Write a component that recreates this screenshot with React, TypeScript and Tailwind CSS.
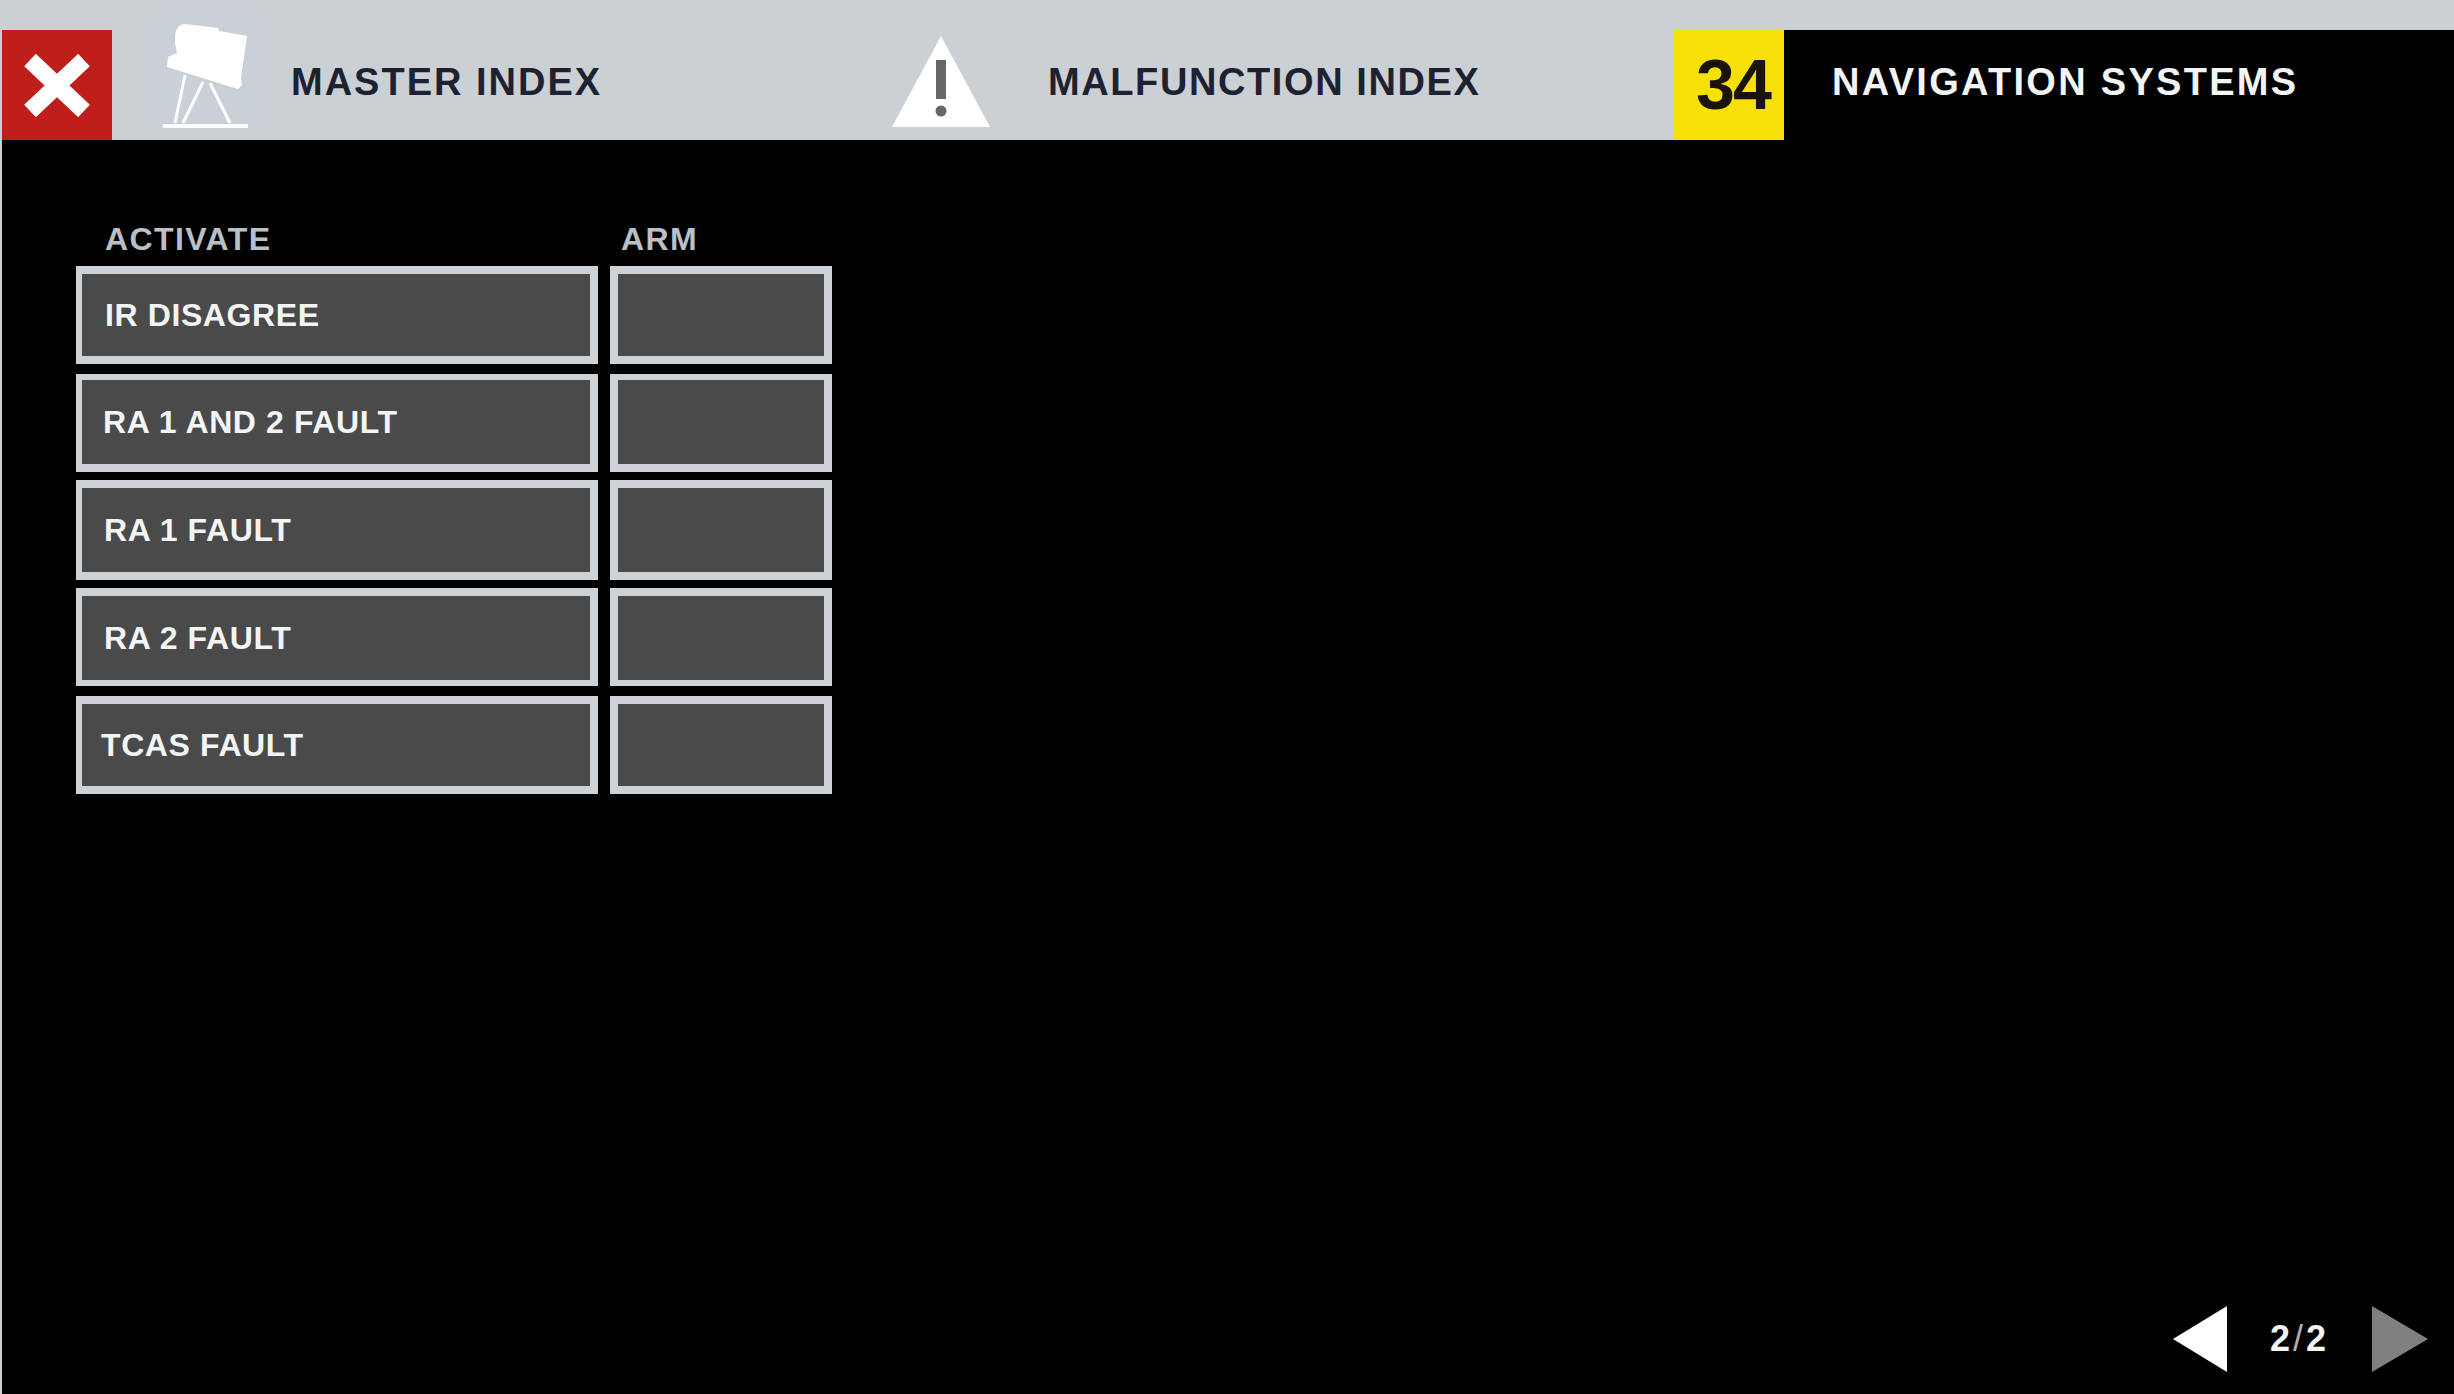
const rows = [
  { label: 'IR DISAGREE', gap: 'mt-0', box: 'h-[98px] border-t-8 border-b-8', text: 'pl-[23px]' },
  { label: 'RA 1 AND 2 FAULT', gap: 'mt-[10px]', box: 'h-[98px] border-t-[6px] border-b-8', text: 'pl-[21px]' },
  { label: 'RA 1 FAULT', gap: 'mt-2', box: 'h-[100px] border-t-8 border-b-8', text: 'pl-[22px]' },
  { label: 'RA 2 FAULT', gap: 'mt-2', box: 'h-[98px] border-t-8 border-b-[6px]', text: 'pl-[22px]' },
  { label: 'TCAS FAULT', gap: 'mt-[10px]', box: 'h-[98px] border-t-8 border-b-8', text: 'pl-[19px]' },
];

function MasterIcon() {
  return (
    <div className="mt-[15px] h-[113px] w-[108px] bg-[#c9d0d7]">
      <svg viewBox="0 0 108 113" className="h-full w-full">
        <path
          d="M26 20 Q28 9 36 9 L69 13 L70 16 L98 21 L92 63 L93 70 L89 74 L18 52 L19 42 L28 38 L26 28 Z"
          fill="#fff"
        />
        <path d="M36 60 L26 108 M54 67 L34 108 M61 68 L81 108" stroke="#fff" strokeWidth="3" fill="none" />
        <rect x="14" y="109" width="85" height="4" fill="#fff" />
      </svg>
    </div>
  );
}

function WarningIcon() {
  return (
    <svg viewBox="0 0 98 91" className="mt-9 h-[91px] w-[98px]">
      <path d="M49 0 L98 91 L0 91 Z" fill="#fff" />
      <rect x="44" y="24" width="10" height="39" fill="#666" />
      <circle cx="49" cy="75" r="5.5" fill="#666" />
    </svg>
  );
}

export default function App() {
  return (
    <div className="flex h-[1394px] flex-col bg-black font-['Liberation_Sans',Arial,sans-serif] font-bold">
      {/* header */}
      <div className="flex h-[140px] shrink-0 bg-[#cbd0d5]">
        <div className="ml-[2px] mt-[30px] flex h-[110px] w-[110px] shrink-0 items-center justify-center bg-[#bf1e1b]">
          <svg viewBox="0 0 66 63" className="h-[63px] w-[66px]">
            <path d="M6 6 L60 57 M60 6 L6 57" stroke="#fff" strokeWidth="17" fill="none" />
          </svg>
        </div>
        <div className="ml-[37px] flex w-[743px] shrink-0">
          <MasterIcon />
          <span className="ml-[34px] mt-[60px] text-[38px] leading-[44px] tracking-[2px] text-[#1e2230]">MASTER INDEX</span>
        </div>
        <div className="flex w-[782px] shrink-0">
          <WarningIcon />
          <span className="ml-[58px] mt-[60px] text-[38px] leading-[44px] tracking-[1.6px] text-[#1e2230]">MALFUNCTION INDEX</span>
        </div>
        <div className="mt-[30px] flex h-[110px] flex-1">
          <div className="flex w-[110px] items-center justify-center bg-[#f7e005] pl-2 text-[70px] tracking-[-2px] text-[#1a1408]">34</div>
          <div className="flex flex-1 bg-black pl-[48px]">
            <span className="mt-[30px] text-[38px] leading-[44px] tracking-[2.3px] text-[#f2f4f5]">NAVIGATION SYSTEMS</span>
          </div>
        </div>
      </div>

      {/* table */}
      <div className="flex flex-1 flex-col border-l-2 border-[#cbd0d5] pl-[74px]">
        <div className="mt-[81px] flex text-[32px] leading-[37px] tracking-[1.4px] text-[#b9c0c6]">
          <span className="ml-[29px] w-[516px]">ACTIVATE</span>
          <span>ARM</span>
        </div>
        <div className="mt-2 flex flex-col">
          {rows.map((row) => (
            <div key={row.label} className={`flex gap-3 ${row.gap}`}>
              <div
                className={`flex w-[522px] items-center border-x-8 border-l-[6px] border-[#cdd2d6] bg-[#4a4a4a] ${row.box} ${row.text} text-[32px] tracking-[0.6px] text-[#f2f4f5]`}
              >
                {row.label}
              </div>
              <div className={`w-[222px] border-x-8 border-[#cdd2d6] bg-[#4a4a4a] ${row.box}`} />
            </div>
          ))}
        </div>

        {/* pager */}
        <div className="mb-[22px] mr-[26px] mt-auto flex items-center self-end">
          <svg viewBox="0 0 54 66" className="h-[66px] w-[54px]">
            <path d="M0 33 L54 0 L54 66 Z" fill="#fff" />
          </svg>
          <span className="ml-[43px] w-[102px] text-[36px] tracking-[3px] text-[#f2f4f5]">
            2<span className="font-normal text-[#b0b0b0]">/</span>2
          </span>
          <svg viewBox="0 0 56 66" className="h-[66px] w-[56px]">
            <path d="M56 33 L0 0 L0 66 Z" fill="#808080" />
          </svg>
        </div>
      </div>
    </div>
  );
}
